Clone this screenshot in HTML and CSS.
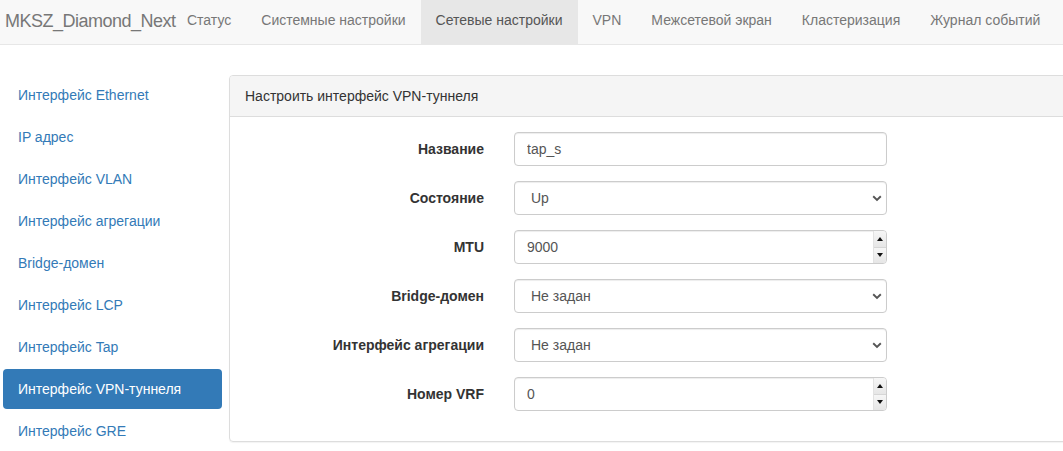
FILE: index.html
```html
<!DOCTYPE html>
<html lang="ru">
<head>
<meta charset="utf-8">
<title>MKSZ_Diamond_Next</title>
<link rel="stylesheet" href="styles.css">
</head>
<body>
<nav class="navbar">
  <a class="brand" href="#">MKSZ_Diamond_Next</a>
  <ul class="nav">
    <li><a href="#">Статус</a></li>
    <li><a href="#">Системные настройки</a></li>
    <li class="active"><a href="#">Сетевые настройки</a></li>
    <li><a href="#">VPN</a></li>
    <li><a href="#">Межсетевой экран</a></li>
    <li><a href="#">Кластеризация</a></li>
    <li><a href="#">Журнал событий</a></li>
  </ul>
</nav>
<div class="content">
  <ul class="pills">
    <li><a href="#">Интерфейс Ethernet</a></li>
    <li><a href="#">IP адрес</a></li>
    <li><a href="#">Интерфейс VLAN</a></li>
    <li><a href="#">Интерфейс агрегации</a></li>
    <li><a href="#">Bridge-домен</a></li>
    <li><a href="#">Интерфейс LCP</a></li>
    <li><a href="#">Интерфейс Tap</a></li>
    <li class="active"><a href="#">Интерфейс VPN-туннеля</a></li>
    <li><a href="#">Интерфейс GRE</a></li>
  </ul>
  <div class="panel">
    <div class="panel-heading">Настроить интерфейс VPN-туннеля</div>
    <form class="panel-body">
      <div class="row">
        <label class="label">Название</label>
        <div class="field"><input class="control" type="text" value="tap_s"></div>
      </div>
      <div class="row">
        <label class="label">Состояние</label>
        <div class="field">
          <select class="control select"><option>Up</option><option>Down</option></select>
          <svg class="chevron" width="10" height="7" viewBox="0 0 10 7"><path d="M1.2 1.3 L5 5 L8.8 1.3" fill="none" stroke="#555" stroke-width="1.9"/></svg>
        </div>
      </div>
      <div class="row">
        <label class="label">MTU</label>
        <div class="field">
          <input class="control" type="text" value="9000">
          <div class="spinner"><span class="spin up"></span><span class="spin down"></span></div>
        </div>
      </div>
      <div class="row">
        <label class="label">Bridge-домен</label>
        <div class="field">
          <select class="control select"><option>Не задан</option></select>
          <svg class="chevron" width="10" height="7" viewBox="0 0 10 7"><path d="M1.2 1.3 L5 5 L8.8 1.3" fill="none" stroke="#555" stroke-width="1.9"/></svg>
        </div>
      </div>
      <div class="row">
        <label class="label">Интерфейс агрегации</label>
        <div class="field">
          <select class="control select"><option>Не задан</option></select>
          <svg class="chevron" width="10" height="7" viewBox="0 0 10 7"><path d="M1.2 1.3 L5 5 L8.8 1.3" fill="none" stroke="#555" stroke-width="1.9"/></svg>
        </div>
      </div>
      <div class="row">
        <label class="label">Номер VRF</label>
        <div class="field">
          <input class="control" type="text" value="0">
          <div class="spinner"><span class="spin up"></span><span class="spin down"></span></div>
        </div>
      </div>
    </form>
  </div>
</div>
</body>
</html>
```
FILE: styles.css
```css
* { box-sizing: border-box; }
html, body { margin: 0; padding: 0; }
body {
  font-family: "Liberation Sans", Arial, sans-serif;
  font-size: 14px;
  line-height: 20px;
  color: #333;
  background: #fff;
  overflow: hidden;
}
a { text-decoration: none; }
ul { list-style: none; margin: 0; padding: 0; }

.navbar {
  display: flex;
  height: 45px;
  background: #f8f8f8;
  border-bottom: 1px solid #e7e7e7;
}
.brand {
  display: block;
  padding: 11px 0 0 5px;
  font-size: 18px;
  line-height: 20px;
  letter-spacing: -0.5px;
  color: #777;
  width: 172px;
  white-space: nowrap;
}
.nav { display: flex; }
.nav a {
  display: block;
  height: 44px;
  padding: 10px 15px 0;
  color: #777;
  white-space: nowrap;
}
.nav .active a { background: #e7e7e7; color: #555; }

.content {
  display: flex;
  align-items: flex-start;
  padding: 30px 0 0 3px;
  overflow: hidden;
}
.pills { width: 219px; flex: none; margin-right: 7px; }
.pills li + li { margin-top: 2px; }
.pills a {
  display: block;
  padding: 10px 15px;
  color: #337ab7;
  border-radius: 4px;
}
.pills .active a { background: #337ab7; color: #fff; }

.panel {
  flex: none;
  width: 1000px;
  border: 1px solid #ddd;
  border-radius: 4px;
  box-shadow: 0 1px 1px rgba(0,0,0,.05);
}
.panel-heading {
  padding: 10px 15px;
  background: #f5f5f5;
  border-bottom: 1px solid #ddd;
  color: #333;
  border-radius: 3px 3px 0 0;
}
.panel-body { display: block; padding: 15px; margin: 0; }
.row { display: flex; margin-bottom: 15px; }
.label {
  width: 239px;
  margin-right: 30px;
  text-align: right;
  font-weight: bold;
  padding-top: 7px;
  color: #333;
}
.field { position: relative; width: 373px; }
.control {
  display: block;
  width: 100%;
  height: 34px;
  padding: 6px 12px;
  font-family: "Liberation Sans", Arial, sans-serif;
  font-size: 14px;
  line-height: 20px;
  color: #555;
  background: #fff;
  border: 1px solid #ccc;
  border-radius: 4px;
  box-shadow: inset 0 1px 1px rgba(0,0,0,.075);
  outline: none;
}
.select {
  -webkit-appearance: none;
  appearance: none;
  padding-left: 16px;
}
.chevron {
  position: absolute;
  right: 5px;
  top: 14px;
  pointer-events: none;
}
.spinner {
  position: absolute;
  right: 1px;
  top: 1px;
  bottom: 1px;
  width: 13px;
  display: flex;
  flex-direction: column;
  border-left: 1px solid #e2e2e2;
  border-radius: 0 3px 3px 0;
  overflow: hidden;
}
.spin {
  flex: 1;
  position: relative;
  background: linear-gradient(#f6f6f6, #e6e6e6);
}
.spin.up { border-bottom: 1px solid #d6d6d6; }
.spin::after {
  content: "";
  position: absolute;
  left: 3px;
  top: 50%;
  margin-top: -2px;
  border-left: 3.5px solid transparent;
  border-right: 3.5px solid transparent;
}
.spin.up::after { border-bottom: 4px solid #111; }
.spin.down::after { border-top: 4px solid #111; }
```
